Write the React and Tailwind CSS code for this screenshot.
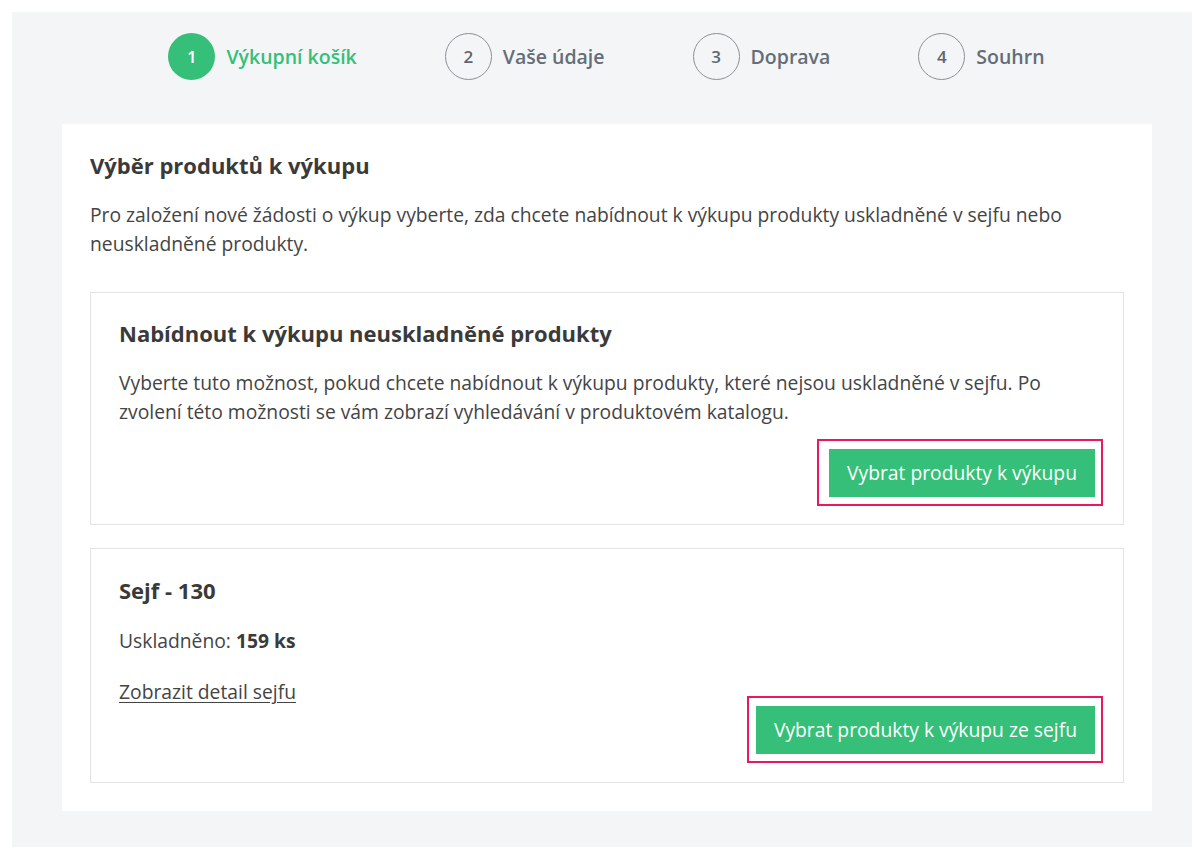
import React from "react";

const font = { fontFamily: '"Open Sans", "Noto Sans", sans-serif' };

function Step({ n, label, active }) {
  return (
    <div className="flex items-center gap-[11px]">
      <div
        className={
          active
            ? "w-[47px] h-[47px] rounded-full bg-[#35bf78] text-white flex items-center justify-center text-[17px] font-semibold"
            : "w-[47px] h-[47px] rounded-full border-[1.5px] border-[#8c9097] text-[#5f6670] flex items-center justify-center text-[17px] font-semibold"
        }
      >
        {n}
      </div>
      <span
        className={
          active
            ? "text-[19.5px] font-semibold text-[#35bf78]"
            : "text-[19.5px] font-semibold text-[#656d77]"
        }
      >
        {label}
      </span>
    </div>
  );
}

function GreenButton({ children, outline }) {
  return (
    <div className="relative">
      <span
        className={
          "absolute border-[2.5px] border-[#e8195f] pointer-events-none " + outline
        }
      />
      <button className="relative bg-[#35bf78] text-white text-[19.3px] h-[48px] px-[18px] leading-none">
        {children}
      </button>
    </div>
  );
}

export default function App() {
  return (
    <div className="bg-white p-3 text-[#3a3a3a]" style={font}>
      <div className="bg-[#f4f5f7] w-[1180px] h-[835px] pt-[21px]">
        <div className="flex justify-center gap-[88px] pl-[9px]">
          <Step n="1" label="Výkupní košík" active />
          <Step n="2" label="Vaše údaje" />
          <Step n="3" label="Doprava" />
          <Step n="4" label="Souhrn" />
        </div>
        <div className="ml-[50px] mt-[44px] w-[1090px] bg-white px-[28px] pt-[27px] pb-[28px]">
          <h1 className="text-[22px] font-bold leading-[28px] text-[#3a3a3a]">
            Výběr produktů k výkupu
          </h1>
          <p className="mt-[21px] text-[19.3px] leading-[29px] text-[#444]">
            Pro založení nové žádosti o výkup vyberte, zda chcete nabídnout k výkupu produkty uskladněné v sejfu nebo neuskladněné produkty.
          </p>
          <div className="mt-[34px] border border-[#e3e3e3] px-[28px] pt-[26px] pb-[27px]">
            <h2 className="text-[22px] font-bold leading-[28px] text-[#3a3a3a]">
              Nabídnout k výkupu neuskladněné produkty
            </h2>
            <p className="mt-[21px] text-[19.3px] leading-[29px] text-[#444]">
              Vyberte tuto možnost, pokud chcete nabídnout k výkupu produkty, které nejsou uskladněné v sejfu. Po zvolení této možnosti se vám zobrazí vyhledávání v produktovém katalogu.
            </p>
            <div className="flex justify-end mt-[23px]">
              <GreenButton outline="-left-[12px] -right-[8px] -top-[10px] -bottom-[9px]">
                Vybrat produkty k výkupu
              </GreenButton>
            </div>
          </div>
          <div className="mt-[23px] border border-[#e3e3e3] px-[28px] pt-[27px] pb-[28px]">
            <h2 className="text-[22px] font-bold leading-[28px] text-[#3a3a3a]">
              Sejf - 130
            </h2>
            <p className="mt-[22px] text-[19.3px] leading-[29px] text-[#444]">
              Uskladněno: <span className="font-bold text-[#3a3a3a]">159 ks</span>
            </p>
            <div className="mt-[22px] flex items-start justify-between">
              <a href="#" className="text-[19.3px] leading-[29px] text-[#444] underline underline-offset-[3px]">
                Zobrazit detail sejfu
              </a>
              <div className="mt-[29px]">
                <GreenButton outline="-left-[9px] -right-[8px] -top-[10px] -bottom-[9px]">
                  Vybrat produkty k výkupu ze sejfu
                </GreenButton>
              </div>
            </div>
          </div>
        </div>
      </div>
    </div>
  );
}
